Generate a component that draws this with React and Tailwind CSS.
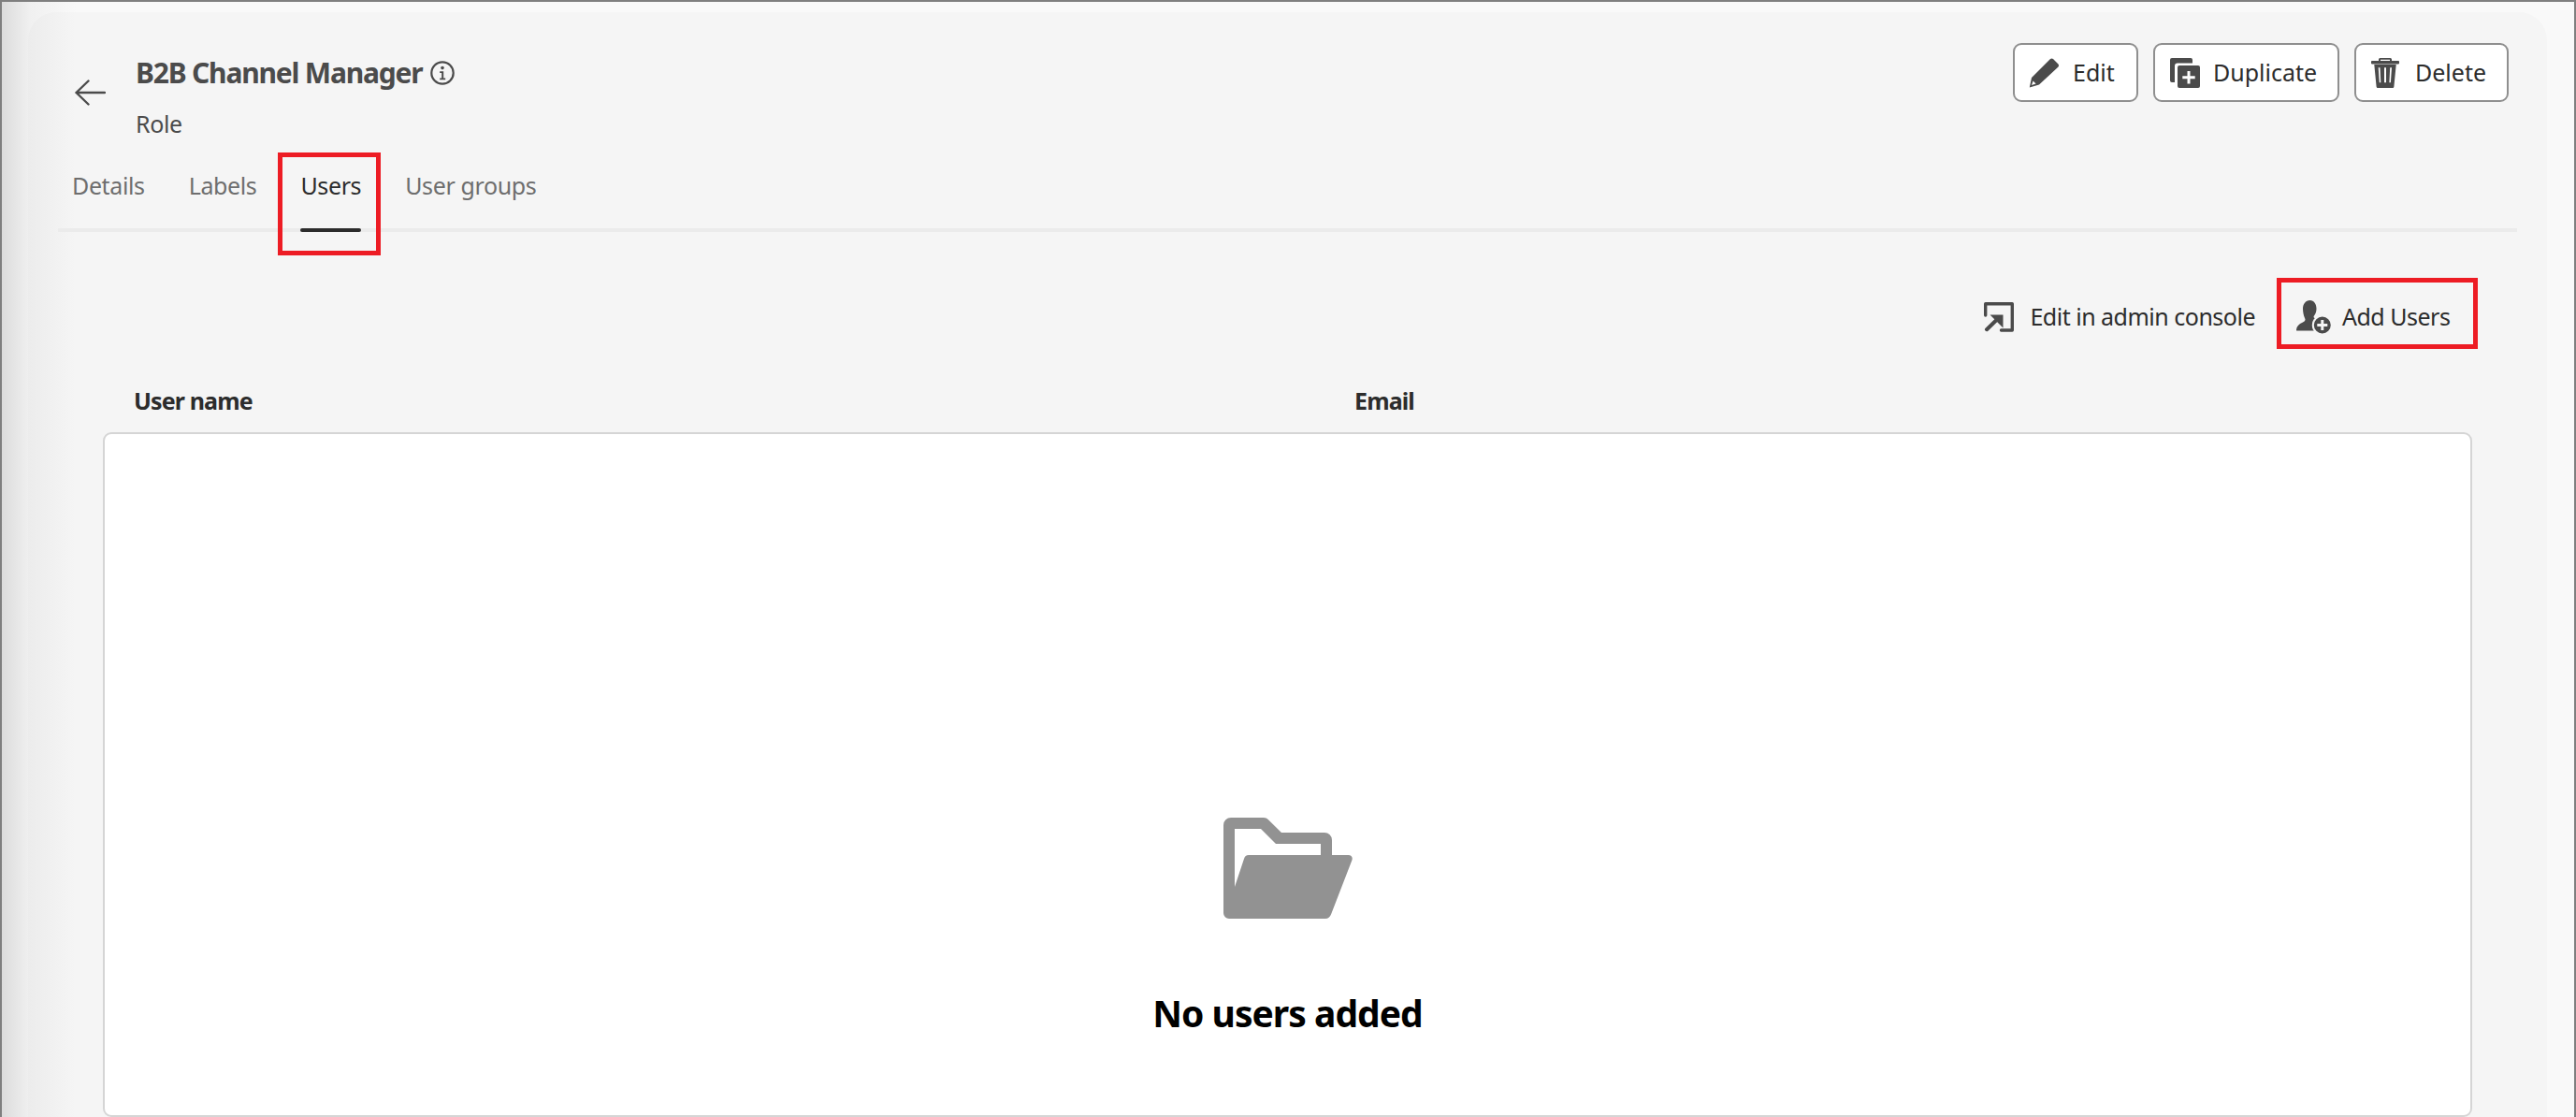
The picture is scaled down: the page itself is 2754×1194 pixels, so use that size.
const FONT = "font-['Noto_Sans',sans-serif]";

function Arrow() {
  return (
    <svg width="33" height="28" viewBox="0 0 33 28" fill="none" stroke="#4b4b4b" strokeWidth="2.4" strokeLinecap="round" strokeLinejoin="round">
      <path d="M1.5 14H32M14.5 1.5 1.5 14l13 12.5" />
    </svg>
  );
}
function Info() {
  return (
    <svg width="26" height="26" viewBox="0 0 26 26" fill="none">
      <circle cx="13" cy="13" r="11.7" stroke="#4b4b4b" strokeWidth="2.2" />
      <circle cx="13" cy="7.6" r="1.8" fill="#4b4b4b" />
      <path d="M10.2 11.2h4v7.2h2v1.8h-6v-1.8h2v-5.4h-2z" fill="#4b4b4b" />
    </svg>
  );
}
function Pencil() {
  return (
    <svg width="33" height="32" viewBox="0 0 33 32" fill="#4b4b4b">
      <path fillRule="evenodd" d="M23 1q1.500-1 3 0l5.500 5.500q1.200 1.500 0 3L11 28.500.8 31.500 3 21zM4.500 24.500 7.600 27.600 3 29z" />
    </svg>
  );
}
function Duplicate() {
  return (
    <svg width="32" height="32" viewBox="0 0 32 32" fill="#4b4b4b">
      <path d="M2 0h20a2 2 0 0 1 2 2v3.600H8a3 3 0 0 0-3 3V26H2a2 2 0 0 1-2-2V2a2 2 0 0 1 2-2z" />
      <path fillRule="evenodd" d="M10 8h20a2 2 0 0 1 2 2v20a2 2 0 0 1-2 2H10a2 2 0 0 1-2-2V10a2 2 0 0 1 2-2zm8.500 6v5.200h-5.200v3h5.200V27.400h3v-5.200h5.200v-3h-5.200V14z" />
    </svg>
  );
}
function Trash() {
  return (
    <svg width="30" height="32" viewBox="0 0 30 32" fill="#4b4b4b">
      <path d="M8 3.500V1.500Q8 0 9.500 0h11Q22 0 22 1.500v2h-2V1.800H10v1.700z" />
      <rect x="0" y="3" width="30" height="3.400" rx="0.8" />
      <path fillRule="evenodd" d="M3.300 7h23.400l-2.300 23.500c-.1 1-.8 1.500-1.700 1.500H7.300c-.9 0-1.600-.5-1.700-1.500zM7.700 10.300l1.100 16h1.500l-.8-16zm6.300 0v16h2v-16zm6.200 0-.8 16h1.500l1.100-16z" />
    </svg>
  );
}
function ExportIcon() {
  return (
    <svg width="32" height="32" viewBox="0 0 32 32" fill="none">
      <path d="M1.700 14V1.700H30.300V30H18.500" stroke="#4b4b4b" strokeWidth="3.400" strokeLinecap="round" strokeLinejoin="round" />
      <path d="M6.500 13.500H20.500V27.500Z" fill="#4b4b4b" />
      <path d="M3 29.200 13.500 19" stroke="#4b4b4b" strokeWidth="4" strokeLinecap="round" />
    </svg>
  );
}
function UserAdd() {
  return (
    <svg width="37" height="36" viewBox="0 0 37 36" fill="#4b4b4b">
      <path d="M14.500 0C19 0 21.500 4 21.500 9c0 3-1 5.500-2.500 7.500-.8 1-.5 2 .5 2.600L24 21V32.500H.6C.1 32.500 0 32 0 31.500c.3-3.500 2.500-6 7-8 2.800-1.200 3-3 2-4.500C7.800 16 7 12.500 7 9 7 4 10 0 14.500 0z" />
      <circle cx="27.800" cy="26.500" r="11" fill="#f5f5f5" />
      <path fillRule="evenodd" d="M27.800 17.500a9 9 0 1 1 0 18 9 9 0 0 1 0-18zm-1.500 3.500v4H22.300v3h4v4h3v-4h4v-3h-4v-4z" />
    </svg>
  );
}
function Folder() {
  return (
    <svg width="138" height="108" viewBox="0 0 138 108" fill="#929292">
      <path fillRule="evenodd" d="M8 0h35c2 0 3.500.8 5 2.200L62 16h46a8 8 0 0 1 8 8v16h17.500c3.200 0 5 2.700 3.900 5.400l-22.300 57.800c-1.200 3-3.200 4.800-6.100 4.800H6a6 6 0 0 1-6-6V8a8 8 0 0 1 8-8zm4 12v62l10-30c.8-2.500 2.200-4 5-4h77V28H56L40 12z" />
    </svg>
  );
}

function Btn({ icon, label, w, gap }) {
  return (
    <button className={`flex items-center h-[63px] rounded-[9px] border-2 border-[#8f8f8f] bg-white text-[25px] text-[#2c2c2c] ${w} ${gap}`}>
      {icon}
      <span>{label}</span>
    </button>
  );
}

function Tab({ label, active }) {
  return (
    <div className={`relative h-[84px] flex items-start pt-[20px] text-[25px] tracking-[-0.015em] ${active ? "text-[#2c2c2c]" : "text-[#6e6e6e]"}`}>
      {label}
      {active && (
        <>
          <span className="absolute left-0 right-0 bottom-[-4px] h-[4px] rounded-full bg-[#2c2c2c]" />
          <span className="absolute left-[-24px] right-[-21px] top-[3px] h-[110px] border-[5px] border-[#ed1c24]" />
        </>
      )}
    </div>
  );
}

export default function App() {
  return (
    <div className={`${FONT} h-screen w-full overflow-hidden border-t-2 border-x-2 border-[#7f7f7f] bg-[linear-gradient(to_right,#dcdcdc,#f0f0f0_30px,#f9f9f9_80px)] flex flex-col`}>
      <div className="flex-1 mt-[11px] ml-[28px] mr-[29px] rounded-t-[30px] bg-[linear-gradient(to_right,#ececec,#f5f5f5_50px)] flex flex-col">
        <header className="flex justify-between items-start pt-[33px] pl-[50px] pr-[41px]">
          <div className="flex items-start">
            <div className="pt-[39px] mr-[32px]"><Arrow /></div>
            <div>
              <div className="flex items-center pt-[15px] h-[49px] gap-[9px]">
                <span className="text-[30px] leading-[34px] font-bold text-[#4b4b4b] tracking-[-0.04em]">B2B Channel Manager</span>
                <Info />
              </div>
              <div className="mt-[20px] text-[25px] leading-[34px] text-[#4b4b4b] tracking-[-0.015em]">Role</div>
            </div>
          </div>
          <div className="flex gap-[16px]">
            <Btn icon={<Pencil />} label="Edit" w="w-[134px] pl-[15px]" gap="gap-[14px]" />
            <Btn icon={<Duplicate />} label="Duplicate" w="w-[199px] pl-[16px]" gap="gap-[14px]" />
            <Btn icon={<Trash />} label="Delete" w="w-[165px] pl-[16px]" gap="gap-[17px]" />
          </div>
        </header>
        <nav className="mx-[32px] mt-[11px] flex gap-[47px] pl-[15px] border-b-[4px] border-[#ebebeb]">
          <Tab label="Details" />
          <Tab label="Labels" />
          <Tab active label="Users" />
          <Tab label="User groups" />
        </nav>
        <div className="flex justify-end items-center mt-[49px] pr-[74px] h-[76px] text-[25px] text-[#2c2c2c] tracking-[-0.02em]">
          <div className="flex items-center gap-[17px] mr-[23px] pt-[7px]">
            <ExportIcon />
            <span>Edit in admin console</span>
          </div>
          <div className="relative flex items-center gap-[12px] h-[76px] w-[215px] pl-[21px] pt-[7px]">
            <UserAdd />
            <span>Add Users</span>
            <span className="absolute inset-0 border-[5px] border-[#ed1c24]" />
          </div>
        </div>
        <div className="flex mt-[38px] pl-[113px] text-[25px] leading-[34px] font-bold text-[#2c2c2c] tracking-[-0.035em]">
          <div className="w-[1305px]">User name</div>
          <div>Email</div>
        </div>
        <section className="flex-1 ml-[80px] mr-[80px] mt-[17px] rounded-[9px] border-2 border-[#d5d5d5] bg-white flex flex-col items-center pt-[410px]">
          <Folder />
          <div className="mt-[76px] text-[39px] leading-[50px] font-bold text-black tracking-[-0.025em]">No users added</div>
        </section>
      </div>
    </div>
  );
}
